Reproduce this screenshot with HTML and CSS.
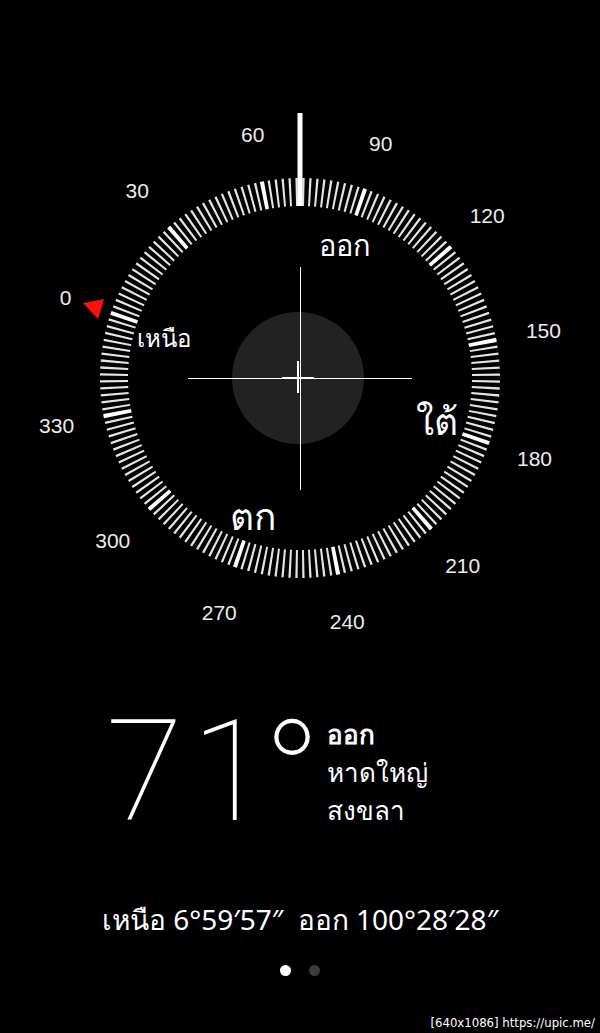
FILE: index.html
```html
<!DOCTYPE html>
<html lang="th">
<head>
	<meta charset="UTF-8" />
	<meta name="viewport" content="width=device-width, initial-scale=1.0" />
	<title>เข็มทิศ</title>
	<link rel="stylesheet" href="styles.css">
</head>
<body>
    <div class="screen">
        <svg class="compass" width="600" height="660" viewBox="0 0 600 660">
            <!-- dial ring: 2 degree ticks, heavier every 30 degrees -->
            <circle class="ticks" cx="300" cy="378" r="186" pathLength="360" transform="rotate(-161 300 378)" />
            <circle class="ticks-major" cx="300" cy="378" r="186" pathLength="360" transform="rotate(-161 300 378)" />
            <rect class="heading" x="297.5" y="113" width="5" height="93" />

            <polygon class="north-mark" points="83,303 104,299 98,319" />

            <text class="num" x="65.5" y="297.3">0</text>
            <text class="num" x="137.3" y="190.8">30</text>
            <text class="num" x="252.7" y="134.6">60</text>
            <text class="num" x="380.7" y="143.5">90</text>
            <text class="num" x="487.2" y="215.3">120</text>
            <text class="num" x="543.4" y="330.7">150</text>
            <text class="num" x="534.5" y="458.7">180</text>
            <text class="num" x="462.7" y="565.2">210</text>
            <text class="num" x="347.3" y="621.4">240</text>
            <text class="num" x="219.3" y="612.5">270</text>
            <text class="num" x="112.8" y="540.7">300</text>
            <text class="num" x="56.6" y="425.3">330</text>

            <text class="cardinal" x="164" y="337">เหนือ</text>
            <text class="cardinal east" x="345" y="244">ออก</text>
            <text class="cardinal big" x="437" y="420">ใต้</text>
            <text class="cardinal big" x="253" y="515">ตก</text>

            <circle class="level" cx="298" cy="378" r="66" />
            <line class="cross" x1="188" y1="378.5" x2="412" y2="378.5" />
            <line class="cross" x1="300.5" y1="267" x2="300.5" y2="490" />
            <line class="bubble" x1="282" y1="378" x2="314" y2="378" />
            <line class="bubble" x1="298" y1="361" x2="298" y2="393" />
        </svg>

        <div class="reading">
            <div class="heading-value"><span class="digits">7<span class="last">1</span></span><span class="deg">°</span></div>
            <div class="place">
                <div class="place-dir">ออก</div>
                <div>หาดใหญ่</div>
                <div>สงขลา</div>
            </div>
        </div>

        <div class="coords">เหนือ 6°59′57″&nbsp;&nbsp;ออก 100°28′28″</div>

        <div class="dots">
            <span class="dot active"></span>
            <span class="dot"></span>
        </div>

        <div class="stamp">[640x1086] https://upic.me/</div>
    </div>
</body>
</html>
```

FILE: styles.css
```css
 body {
     background-color: #000;
     color: #fff;
     font-family: "Noto Sans", "Roboto", sans-serif;
     margin: 0;
 }

 .screen {
     position: relative;
     width: 600px;
     height: 1033px;
     overflow: hidden;
 }

 .compass {
     display: block;
 }

 .ticks {
     fill: none;
     stroke: #e4e4e4;
     stroke-width: 28;
     stroke-dasharray: 0.66 1.34;
     stroke-dashoffset: 0.33;
 }

 .ticks-major {
     fill: none;
     stroke: #fff;
     stroke-width: 28;
     stroke-dasharray: 1.2 28.8;
     stroke-dashoffset: 0.6;
 }

 .heading {
     fill: #fff;
 }

 .north-mark {
     fill: #ff1010;
 }

 .num {
     fill: #ececec;
     font-family: "Liberation Sans", Arial, sans-serif;
     font-size: 21px;
     text-anchor: middle;
     dominant-baseline: central;
 }

 .cardinal {
     fill: #fff;
     font-size: 24px;
     text-anchor: middle;
     dominant-baseline: central;
 }

 .cardinal.east {
     font-size: 29px;
 }

 .cardinal.big {
     font-size: 37px;
 }

 .level {
     fill: #222;
 }

 .cross {
     stroke: #fff;
     stroke-width: 1;
 }

 .bubble {
     stroke: #fff;
     stroke-width: 2;
 }

 .reading {
     display: flex;
     align-items: flex-start;
     margin-top: 41px;
     padding-left: 106px;
 }

 .heading-value {
     display: flex;
     align-items: flex-start;
     font-family: "Roboto", sans-serif;
     font-weight: 100;
     line-height: 1;
 }

 .digits {
     font-size: 141px;
     letter-spacing: 8px;
 }

 .digits .last {
     letter-spacing: -6px;
 }

 .deg {
     font-size: 155px;
 }

 .place {
     margin-left: 5px;
     margin-top: 14px;
     font-size: 26px;
     line-height: 38px;
 }

 .place-dir {
     font-weight: bold;
 }

 .coords {
     margin-top: 42px;
     text-align: center;
     font-size: 28px;
 }

 .dots {
     display: flex;
     justify-content: center;
     gap: 18px;
     margin-top: 23px;
 }

 .dot {
     width: 11px;
     height: 11px;
     border-radius: 50%;
     background-color: #3c3c3c;
 }

 .dot.active {
     background-color: #fff;
 }

 .stamp {
     position: absolute;
     right: 0;
     bottom: 0;
     padding: 0 5px 3px 4px;
     background-color: #000;
     font-family: "Liberation Sans Narrow", "DejaVu Sans Condensed", sans-serif;
     font-size: 13px;
     color: #fff;
 }
```
